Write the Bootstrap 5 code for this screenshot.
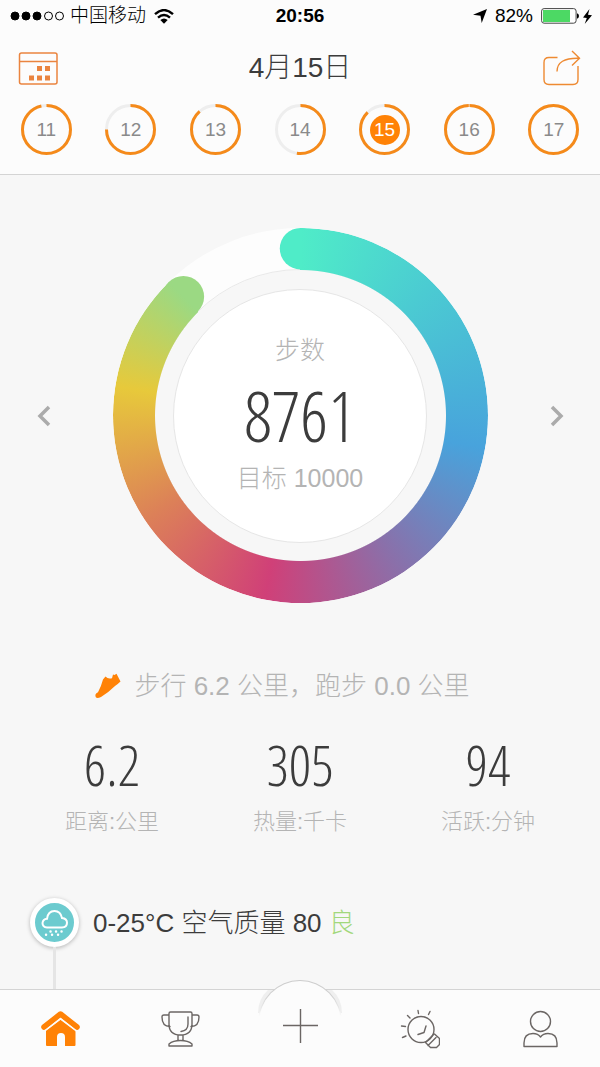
<!DOCTYPE html>
<html lang="zh-CN">
<head>
<meta charset="utf-8">
<meta name="viewport" content="width=device-width, initial-scale=1">
<title>4月15日 步数</title>
<link href="https://cdn.jsdelivr.net/npm/bootstrap@5.3.0/dist/css/bootstrap.min.css" rel="stylesheet">
<style>
  :root { --accent: #ff8206; --ink: #3c3c3c; --soft: #b4b4b4; --line: #d4d4d4; --bar: #fcfcfc; }
  body { font-family: "Liberation Sans", "Noto Sans CJK SC", sans-serif; background: #f7f7f7; color: var(--ink); }
  svg { display: block; }
  button svg, a svg { margin: auto; }
  .thin { font-weight: 300; }
  .top-area { background: var(--bar); border-bottom: 1px solid var(--line); }
  .status-row { height: 32px; font-size: 19px; line-height: 32px; color: #000; }
  .title-row { height: 72px; padding: 0 18px; }
  .title-row h1 { font-size: 28px; line-height: 32px; }
  .days { padding-bottom: 19px; }
  .day { display: grid; place-items: center; color: #8a8a8a; font-size: 19px; line-height: 24px; }
  .day > * { grid-area: 1 / 1; }
  .day circle { fill: none; stroke: #eee; stroke-width: 3; }
  .day .arc { stroke: #f58a1a; }
  .day.today span { background: var(--accent); color: #fff; width: 30px; height: 30px; line-height: 30px; border-radius: 50%; text-align: center; }
  .ring-row { padding: 53px 30px 0; }
  .ring { display: grid; place-items: center; width: 375px; height: 375px; }
  .ring > * { grid-area: 1 / 1; }
  .sweep { width: 375px; height: 375px; border-radius: 50%;
    background: conic-gradient(#4fecc8 0deg, #4bcbd2 45deg, #48a3dc 100deg, #8a70aa 147deg, #d04078 191deg, #dc8058 236deg, #e7c93b 279deg, #9bd983 315.4deg, transparent 315.4deg);
    -webkit-mask: radial-gradient(circle, transparent 145px, #000 146px);
    mask: radial-gradient(circle, transparent 145px, #000 146px); }
  .disc { width: 254px; height: 254px; border: 1px solid #e6e6e6; border-radius: 50%; background: #fff; color: var(--soft); font-size: 25px; line-height: 30px; padding-bottom: 4px; }
  .figure-num { font-family: "Open Sans Condensed Light", "Roboto Condensed", "Liberation Sans", sans-serif; font-weight: 300; color: var(--ink); font-size: 56px; line-height: 60px; }
  .disc .figure-num { font-size: 70px; line-height: 68px; margin: 16px 0 14px; }
  .walk { margin-top: 67px; padding-right: 35px; gap: 13px; font-size: 26px; line-height: 32px; color: var(--soft); }
  .stats { margin-top: 32px; padding: 0 18px; }
  .stats .tag { font-size: 22px; line-height: 28px; color: var(--soft); margin-top: 14px; }
  .weather { margin: 62px 0 0 30px; gap: 14px; font-size: 26px; line-height: 32px; }
  .weather .dot { width: 49px; height: 49px; border-radius: 50%; background: #6ccbcf; border: 5px solid #fff; box-shadow: 0 1px 4px #0004; }
  .stem { width: 3px; margin-left: 53px; background: #e5e5e5; }
  .good { color: #a2d87c; }
  .tabs { background: var(--bar); border-top: 1px solid var(--line); height: 78px; }
  .tabs a { color: #6b6664; position: relative; height: 77px; display: grid; place-items: center; }
  .tabs svg { fill: none; stroke: currentColor; stroke-width: 1.4; stroke-linecap: round; stroke-linejoin: round; }
  .tabs .bump { position: absolute; top: -11px; left: 50%; transform: translateX(-50%); stroke: none; }
</style>
</head>
<body>
<div class="d-flex flex-column vh-100 overflow-hidden">
  <header class="top-area">
    <div class="status-row row g-0">
      <div class="col d-flex align-items-center ps-2">
        <svg width="58" height="12" viewBox="-1 0 58 12" stroke="#000" stroke-width="1"><circle cx="6" cy="6" r="4"/><circle cx="17" cy="6" r="4"/><circle cx="28" cy="6" r="4"/><g fill="none"><circle cx="39.500" cy="6" r="4"/><circle cx="50.500" cy="6" r="4"/></g></svg>
        <span class="thin ms-1">中国移动</span>
        <svg class="ms-2" width="20" height="15" viewBox="0 0 20 15" fill="none" stroke="#000" stroke-width="2.4"><path d="M1 5.2Q10-3 19 5.2M4 8.7Q10 3.3 16 8.7"/><path d="M6.3 11Q10 7.8 13.700 11L10 14.800z" fill="#000" stroke="none"/></svg>
      </div>
      <div class="col-auto fw-bold">20:56</div>
      <div class="col d-flex align-items-center justify-content-end pe-2">
        <svg width="14" height="14" viewBox="0 0 14 14"><path d="M14 0 8.700 14 7.500 6.800 0 5.800z"/></svg>
        <span class="ms-2">82%</span>
        <svg class="ms-2" width="38" height="16" viewBox="0 0 38 16"><rect x=".6" y=".6" width="34.500" height="14.600" rx="2.500" fill="#fff" stroke="#444"/><rect x="2" y="2" width="27" height="12" fill="#4cd964"/><path d="M36 5.200q2 .5 2 2.800t-2 2.800z"/></svg>
        <svg class="ms-1" width="9" height="15" viewBox="0 0 9 15"><path d="M6.500 0 0 8.600l3.800.4L1.700 15 9 6.200l-4-.5z"/></svg>
      </div>
    </div>
    <div class="title-row d-flex align-items-center justify-content-between">
      <button class="btn p-0 border-0" type="button" aria-label="日历">
        <svg width="40" height="33" viewBox="0 0 40 33" fill="none" stroke="#ea843f" stroke-width="1.5"><rect x="1.5" y="1" width="37.500" height="31" rx="2"/><path d="M1.500 9.600H39"/><path fill="#ea843f" stroke="none" d="M19 14h5v5h-5zM27 14h5v5h-5zM11 23.500h5v5h-5zM19 23.500h5v5h-5zM27 23.500h5v5h-5z"/></svg>
      </button>
      <h1 class="thin m-0">4月15日</h1>
      <button class="btn p-0 border-0" type="button" aria-label="分享">
        <svg width="40" height="36" viewBox="-1 0 40 36" fill="none" stroke="#ee8a32" stroke-width="1.4"><path d="M14.500 7.500H6Q1 7.500 1 12.500v17Q1 34.500 6 34.500h24q5 0 5-5V16"/><path d="M14 21.500Q14 7.600 36 8.200M29 1l7.500 7.200-7.500 7.300"/></svg>
      </button>
    </div>
    <nav class="days row row-cols-7 g-0 px-1" aria-label="日期" id="days"></nav>
  </header>

  <main class="flex-grow-1 d-flex flex-column overflow-hidden">
    <section class="ring-row d-flex align-items-center justify-content-between">
      <button class="btn p-1 border-0" type="button" aria-label="前一天"><svg width="20" height="22" viewBox="0 0 20 22" fill="none" stroke="#ababab" stroke-width="3.500"><path d="M15 2 6 11l9 9"/></svg></button>
      <div class="ring">
        <svg width="375" height="375" viewBox="0 0 375 375"><circle cx="187.500" cy="187.500" r="166.500" fill="none" stroke="#fdfdfd" stroke-width="42"/><circle cx="187.500" cy="187.500" r="146" fill="none" stroke="#e9e9e9"/><circle cx="187.500" cy="20.700" r="20.700" fill="#4fecc8"/><circle cx="70.400" cy="68.700" r="20.700" fill="#9bd983"/></svg>
        <div class="sweep"></div>
        <div class="disc d-flex flex-column align-items-center justify-content-center">
          <div class="thin">步数</div>
          <div class="figure-num">8761</div>
          <div class="thin">目标 10000</div>
        </div>
      </div>
      <button class="btn p-1 border-0" type="button" aria-label="后一天"><svg width="20" height="22" viewBox="0 0 20 22" fill="none" stroke="#ababab" stroke-width="3.500"><path d="m6 2 9 9-9 9"/></svg></button>
    </section>

    <div class="walk thin d-flex align-items-center justify-content-center">
      <svg width="26" height="26" viewBox="0 0 26 26" fill="#ff8206"><path d="M.5 21.500Q1 20 3 19.200 6 14 8 6.500L10.500 3.500Q13 6.500 17 5.200L18 1.500 19.500 2 21.500.8 25.500 8.500Q23 11 20 13 14 19 6 24 2.500 25.500 1 24.500 0 23 .5 21.500z"/></svg>
      <span>步行 6.2 公里，跑步 0.0 公里</span>
    </div>

    <section class="stats row g-0 text-center">
      <div class="col"><div class="figure-num">6.2</div><div class="tag thin">距离:公里</div></div>
      <div class="col"><div class="figure-num">305</div><div class="tag thin">热量:千卡</div></div>
      <div class="col"><div class="figure-num">94</div><div class="tag thin">活跃:分钟</div></div>
    </section>

    <div class="weather thin d-flex align-items-center">
      <div class="dot"><svg width="39" height="39" viewBox="0 0 39 39" fill="none" stroke="#fff" stroke-width="2"><path d="M12 24.500Q7.500 24 7.500 20 8 16 12 15.800 13 8 19.500 8q6 0 7.500 7 5 .5 5 4.800 0 4.700-5 4.700z"/><path stroke-width="2.400" stroke-linecap="round" d="M15.500 28.500h.1M21 28.500h.1M26.500 28.500h.1M11 31.800h.1M17 31.800h.1M23 31.800h.1"/></svg></div>
      <div>0-25°C 空气质量 80 <span class="good">良</span></div>
    </div>
    <div class="stem flex-grow-1"></div>
  </main>

  <nav class="tabs row g-0 flex-shrink-0" aria-label="主菜单">
    <a class="col" href="#home" aria-label="首页"><svg width="40" height="38" viewBox="0 0 40 38" style="color:var(--accent)"><path d="M4 17 20.500 4 37 17" stroke-width="5.500"/><path d="M6 20.500 20.500 9.500 35.500 20.500V35q0 1-1 1H25V27q0-4-4-4T17 27v9H7q-1 0-1-1z" fill="currentColor" stroke="none"/><path d="M4 21.500 20.500 8.800 37 21.500" stroke="#fcfcfc" stroke-width="1.500"/></svg></a>
    <a class="col" href="#awards" aria-label="奖杯"><svg width="40" height="38" viewBox="0 0 40 38"><path d="M9 3.500Q9 2 10.500 2h20Q32 2 32 3.500V14Q32 25 20.500 25T9 14zM9 5H4Q2 5 2 7q0 9.500 8 9.500M32 5h5q2 0 2 2 0 9.500-8 9.500M28 7v7q0 6.500-7 7.500M18 25v5.500M23 25v5.500M9 36V34q4-3.500 11.500-3.500T32 34v2z"/></svg></a>
    <a class="col" href="#add" aria-label="添加">
      <svg class="bump" width="88" height="44" viewBox="0 0 88 44"><defs><linearGradient id="fade" x1="0" y1="0" x2="0" y2="1"><stop offset="0" stop-color="#ccc"/><stop offset=".4" stop-color="#d2d2d2"/><stop offset=".85" stop-color="#fcfcfc"/></linearGradient></defs><path d="M2 34Q2 20 12 11H76Q86 20 86 34z" fill="#efefef"/><path d="M2 44a42 43 0 0 1 84 0z" fill="url(#fade)"/><path d="M3 44a41 42 0 0 1 82 0z" fill="#fcfcfc"/></svg>
      <svg class="position-relative" width="36" height="42" viewBox="0 0 36 42"><path d="M18.500 1v34M1 17.500h35" stroke-linecap="butt"/></svg></a>
    <a class="col" href="#tips" aria-label="发现"><svg width="40" height="40" viewBox="0 0 40 40"><circle cx="21" cy="20.500" r="13"/><path d="m26 17-2 6.500-6 2M25.500 33.500l8-8M28 36.500l8-8M25.500 33.500l5 5h6l3-3v-6l-5-4.500M18.500 4.500 18 1.500M28.500 5.500 30 2.500M10 9 7.500 6.500M5.500 17.500l-4-.5M6 27 2.500 28.500"/></svg></a>
    <a class="col" href="#me" aria-label="我"><svg width="36" height="38" viewBox="0 0 36 38"><circle cx="18.500" cy="11.500" r="10"/><path d="M2 36.500V33Q2 23.500 11 23.500q5 0 7.500 3.500Q21 23.500 26 23.500q9 0 9 9.500v3.500z"/></svg></a>
  </nav>
</div>
<script src="https://cdn.jsdelivr.net/npm/bootstrap@5.3.0/dist/js/bootstrap.bundle.min.js"></script>
<script>
  // Share of the daily goal reached on each day, in percent
  const days = [[11, 96.5], [12, 75], [13, 88.5], [14, 52.5], [15, 87.6], [16, 99.5], [17, 100]];
  document.getElementById('days').innerHTML = days.map(([d, p]) =>
    `<a class="col day thin text-decoration-none${d === 15 ? ' today' : ''}" href="#d${d}"><svg width="51" height="51" viewBox="0 0 51 51"><circle cx="25.500" cy="25.500" r="24"/><circle class="arc" cx="25.500" cy="25.500" r="24" pathLength="100" stroke-dasharray="${p} 100" transform="rotate(-90 25.500 25.500)"/></svg><span>${d}</span></a>`).join('');
</script>
</body>
</html>
